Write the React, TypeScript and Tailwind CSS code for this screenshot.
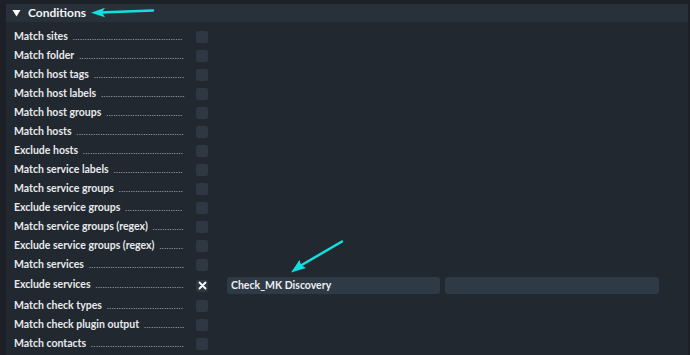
import React, { useLayoutEffect, useRef, useState } from "react";

const rows = [
  "Match sites",
  "Match folder",
  "Match host tags",
  "Match host labels",
  "Match host groups",
  "Match hosts",
  "Exclude hosts",
  "Match service labels",
  "Match service groups",
  "Exclude service groups",
  "Match service groups (regex)",
  "Exclude service groups (regex)",
  "Match services",
  "Exclude services",
  "Match check types",
  "Match check plugin output",
  "Match contacts",
];

function Dots() {
  const boxRef = useRef<HTMLSpanElement>(null);
  const probeRef = useRef<HTMLSpanElement>(null);
  const [count, setCount] = useState(0);
  useLayoutEffect(() => {
    const box = boxRef.current;
    const probe = probeRef.current;
    if (!box || !probe) return;
    const per = probe.getBoundingClientRect().width / 10;
    const w = box.getBoundingClientRect().width;
    setCount(Math.max(0, Math.floor(w / per)));
  }, []);
  return (
    <span ref={boxRef} className="relative ml-[5px] flex-1 text-[8px] leading-[10px] tracking-[0.5px] text-[#bfc3c8]">
      <span ref={probeRef} className="invisible absolute left-0 top-0">
        {count === 0 ? ".........." : ""}
      </span>
      {".".repeat(count)}
    </span>
  );
}

function Row({ label, active }: { label: string; active?: boolean }) {
  return (
    <div className={`flex items-center ${active ? "h-[22px]" : "h-[19px]"}`}>
      <div className="flex w-[171px] items-baseline whitespace-nowrap">
        <span className="text-[10.5px] font-bold leading-[14px] text-[#e8eaec]">{label}</span>
        <Dots />
      </div>
      <div className="ml-[11px] mt-[3px] flex h-[12px] w-[12px] items-center justify-center rounded-[2px] bg-[#2e3742]">
        {active && (
          <svg width="9" height="9" viewBox="0 0 9 9">
            <path d="M1.5 1.5 L7.5 7.5 M7.5 1.5 L1.5 7.5" stroke="#ffffff" strokeWidth="1.8" strokeLinecap="round" />
          </svg>
        )}
      </div>
      {active && (
        <div className="ml-[19px] mt-[3px] flex gap-[5px]">
          <div className="flex h-[17px] w-[213px] items-center rounded-[3px] bg-[#2f3a47] pl-[4px] text-[10.5px] font-bold text-[#eceef0]">
            Check_MK Discovery
          </div>
          <div className="h-[17px] w-[214px] rounded-[3px] bg-[#2f3a47]" />
        </div>
      )}
    </div>
  );
}

export default function App() {
  return (
    <div
      className="relative h-[355px] w-[690px] overflow-hidden bg-[#1d2127]"
      style={{ fontFamily: "Lato, 'Noto Sans', sans-serif" }}
    >
      <div className="ml-[6px] mr-[2px] mt-[4px] h-[351px] bg-[#212830]">
        <div className="flex h-[18px] items-center bg-[#28303a] pl-[6px]">
          <svg width="9" height="8" viewBox="0 0 9 8">
            <path d="M0.5 1 L8.5 1 L4.5 7.5 Z" fill="#ffffff" />
          </svg>
          <span className="ml-[7px] text-[12px] font-bold text-[#f2f3f4]">Conditions</span>
        </div>
        <div className="pl-[8px] pt-[4px]">
          {rows.map((r) => (
            <Row key={r} label={r} active={r === "Exclude services"} />
          ))}
        </div>
      </div>
      <svg className="pointer-events-none absolute left-0 top-0" width="690" height="355">
        <line x1="153" y1="10.5" x2="100" y2="12.5" stroke="#12e0e0" strokeWidth="2.5" strokeLinecap="round" />
        <path d="M91 12.8 L105 7.8 L102 12.6 L105 17.2 Z" fill="#12e0e0" />
        <line x1="342" y1="241.5" x2="300" y2="266" stroke="#12e0e0" strokeWidth="2.5" strokeLinecap="round" />
        <path d="M291 272.5 L299.5 260 L301 265 L306 268 Z" fill="#12e0e0" />
      </svg>
    </div>
  );
}
